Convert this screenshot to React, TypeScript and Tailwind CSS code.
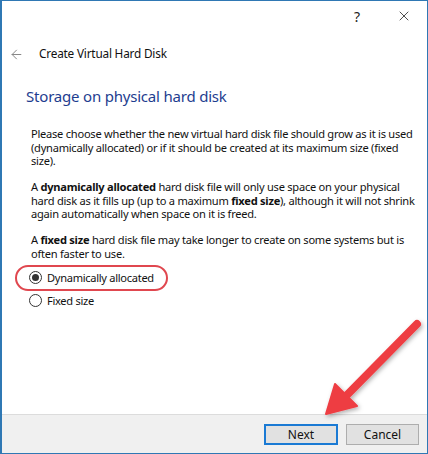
import { ArrowLeft, X } from 'lucide-react';

const font = { fontFamily: '"Noto Sans", "Open Sans", sans-serif' };

const Radio = ({ checked, label }: { checked?: boolean; label: string }) => (
  <div className="flex items-center h-[23px]">
    <span className="w-[13px] h-[13px] rounded-full border border-[#333] bg-white flex items-center justify-center">
      {checked && <span className="w-[7px] h-[7px] rounded-full bg-[#333]" />}
    </span>
    <span className="ml-[5px] text-[11.1px] text-[#111] tracking-[-0.3px]">{label}</span>
  </div>
);

const App = () => {
  return (
    <div
      className="relative w-[428px] h-[454px] bg-white border border-l-2 border-[#2f78b4] flex flex-col overflow-hidden"
      style={font}
    >
      {/* title bar */}
      <div className="h-[30px] flex items-center justify-end">
        <span className="text-[14px] text-[#222] mr-[36px]">?</span>
        <X className="w-[16px] h-[16px] text-[#222] mr-[15px]" strokeWidth={1.2} />
      </div>

      {/* wizard header */}
      <div className="h-[46px] flex items-center">
        <ArrowLeft className="w-[15px] h-[15px] text-[#888] ml-[7px]" strokeWidth={1.6} />
        <span className="ml-[15px] text-[11.8px] text-[#111] tracking-[-0.2px]">Create Virtual Hard Disk</span>
      </div>

      <main className="flex-1 pl-[24px] pr-[10px]">
        <h1 className="text-[15px] text-[#1e3d8f] leading-[20px] mt-[9px] tracking-[-0.2px]">Storage on physical hard disk</h1>

        <div className="pl-[5px] mt-[21px] text-[11.1px] leading-[13.5px] text-[#111] tracking-[-0.25px] whitespace-nowrap">
          <p>
            Please choose whether the new virtual hard disk file should grow as it is used
            <br />
            (dynamically allocated) or if it should be created at its maximum size (fixed
            <br />
            size).
          </p>
          <p className="mt-[12.5px]">
            A <b>dynamically allocated</b> hard disk file will only use space on your physical
            <br />
            hard disk as it fills up (up to a maximum <b>fixed size</b>), although it will not shrink
            <br />
            again automatically when space on it is freed.
          </p>
          <p className="mt-[12.5px]">
            A <b>fixed size</b> hard disk file may take longer to create on some systems but is
            <br />
            often faster to use.
          </p>

          <div className="mt-[6px] -ml-[2px] flex flex-col">
            <div className="relative self-start">
              <Radio checked label="Dynamically allocated" />
              <span className="absolute left-[-14px] right-[-14px] top-[-1px] bottom-[-2px] rounded-full border-2 border-[#e0474f]" />
            </div>
            <Radio label="Fixed size" />
          </div>
        </div>
      </main>

      {/* footer */}
      <footer className="h-[39px] bg-[#f0f0f0] border-t border-[#dcdcdc] flex items-start justify-end pr-[8px] pt-[9px] gap-[8px]">
        <button className="w-[74px] h-[21px] bg-[#e1e1e1] border-2 border-[#1a7ad4] text-[12px] text-[#111] leading-none">
          Next
        </button>
        <button className="w-[73px] h-[21px] bg-[#e1e1e1] border border-[#adadad] text-[12px] text-[#111] leading-none">
          Cancel
        </button>
      </footer>

      {/* annotation arrow */}
      <svg className="absolute left-0 top-0 pointer-events-none" width="428" height="454" viewBox="0 0 428 454">
        <defs>
          <filter id="sh" x="-20%" y="-20%" width="140%" height="140%">
            <feDropShadow dx="1.5" dy="2" stdDeviation="2" floodColor="#000" floodOpacity="0.3" />
          </filter>
        </defs>
        <g filter="url(#sh)" fill="#ee3d43" stroke="#ee3d43">
          <line x1="415" y1="323" x2="343" y2="396" strokeWidth="8" strokeLinecap="round" />
          <polygon points="324,413 333,383 355,405" strokeWidth="2" strokeLinejoin="round" />
        </g>
      </svg>
    </div>
  );
};

export default App;
